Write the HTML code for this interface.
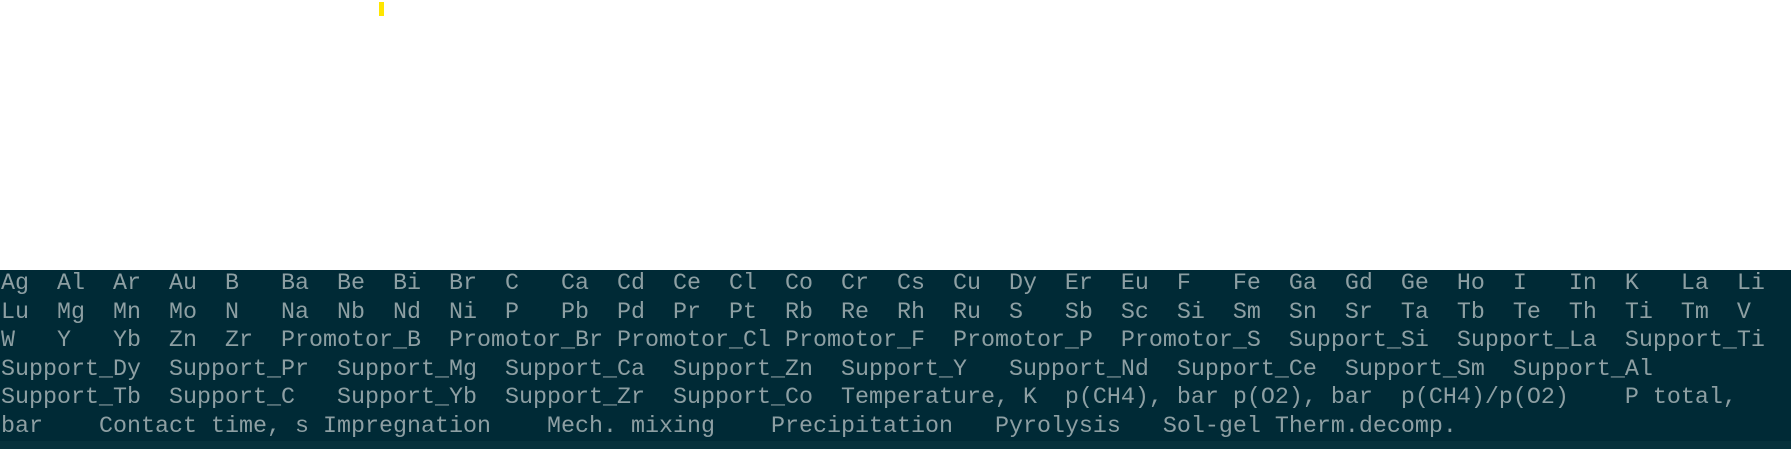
<!DOCTYPE html>
<html><head><meta charset="utf-8"><style>
html,body{margin:0;padding:0;width:1791px;height:449px;background:#fff;overflow:hidden;position:relative}
#y{position:absolute;left:379px;top:2px;width:5px;height:14px;background:#ffe600}
#b{position:absolute;left:0;top:270px;width:1791px;height:171px;background:#002a36}
#b2{position:absolute;left:0;top:441px;width:1791px;height:8px;background:#06313c}
pre{position:absolute;left:1px;top:270px;margin:0;font-family:"Liberation Mono",monospace;font-size:23.33px;line-height:28.5px;color:#8d9fa3;white-space:pre}
</style></head><body>
<div id="y"></div><div id="b"></div><div id="b2"></div>
<pre>Ag  Al  Ar  Au  B   Ba  Be  Bi  Br  C   Ca  Cd  Ce  Cl  Co  Cr  Cs  Cu  Dy  Er  Eu  F   Fe  Ga  Gd  Ge  Ho  I   In  K   La  Li
Lu  Mg  Mn  Mo  N   Na  Nb  Nd  Ni  P   Pb  Pd  Pr  Pt  Rb  Re  Rh  Ru  S   Sb  Sc  Si  Sm  Sn  Sr  Ta  Tb  Te  Th  Ti  Tm  V
W   Y   Yb  Zn  Zr  Promotor_B  Promotor_Br Promotor_Cl Promotor_F  Promotor_P  Promotor_S  Support_Si  Support_La  Support_Ti
Support_Dy  Support_Pr  Support_Mg  Support_Ca  Support_Zn  Support_Y   Support_Nd  Support_Ce  Support_Sm  Support_Al
Support_Tb  Support_C   Support_Yb  Support_Zr  Support_Co  Temperature, K  p(CH4), bar p(O2), bar  p(CH4)/p(O2)    P total,
bar    Contact time, s Impregnation    Mech. mixing    Precipitation   Pyrolysis   Sol-gel Therm.decomp.</pre>
</body></html>
